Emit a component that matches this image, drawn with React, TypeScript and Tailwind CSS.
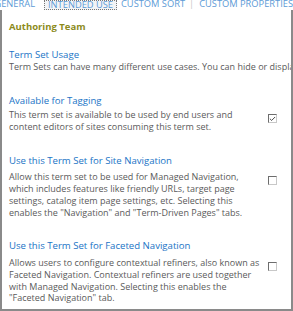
import { Check } from 'lucide-react';

type Option = {
  title: string;
  lines: string[];
  checked: boolean;
  gap: string;
  descGap: string;
};

const options: Option[] = [
  {
    title: 'Available for Tagging',
    lines: [
      'This term set is available to be used by end users and',
      'content editors of sites consuming this term set.',
    ],
    checked: true,
    gap: 'mt-[22px]',
    descGap: 'mt-[2px]',
  },
  {
    title: 'Use this Term Set for Site Navigation',
    lines: [
      'Allow this term set to be used for Managed Navigation,',
      'which includes features like friendly URLs, target page',
      'settings, catalog item page settings, etc. Selecting this',
      'enables the "Navigation" and "Term-Driven Pages" tabs.',
    ],
    checked: false,
    gap: 'mt-[23px]',
    descGap: 'mt-[4px]',
  },
  {
    title: 'Use this Term Set for Faceted Navigation',
    lines: [
      'Allows users to configure contextual refiners, also known as',
      'Faceted Navigation. Contextual refiners are used together',
      'with Managed Navigation. Selecting this enables the',
      '"Faceted Navigation" tab.',
    ],
    checked: false,
    gap: 'mt-[22px]',
    descGap: 'mt-[5px]',
  },
];

const Box = ({ checked }: { checked: boolean }) => (
  <div className="w-[9px] h-[9px] bg-white border border-t-[#6d6d6d] border-l-[#6d6d6d] border-r-[#c8c8c8] border-b-[#c8c8c8] flex items-center justify-center">
    {checked && <Check size={8} strokeWidth={3} className="text-[#333]" />}
  </div>
);

export default function App() {
  return (
    <div className="w-[293px] h-[311px] bg-white overflow-hidden font-['Open_Sans',sans-serif]">
      <div className="h-[10px] overflow-hidden flex items-start text-[9.3px] leading-[8px] text-[#5c9ad6] whitespace-nowrap">
        <div className="w-[35px] flex justify-end">
          <span>GENERAL</span>
        </div>
        <span className="ml-[9px] px-[3px] border border-dotted border-[#777] bg-[#f2f4f6]">INTENDED USE</span>
        <span className="ml-[4px]">CUSTOM SORT</span>
        <span className="ml-[4px] text-[#c8c8c8]">|</span>
        <span className="ml-[5px]">CUSTOM PROPERTIES</span>
      </div>
      <div className="h-[301px] border-2 border-t-0 border-[#8a8a8a] pl-[7px] pr-[14px] overflow-hidden">
        <div className="pt-[10px] text-[9.5px] leading-[14px] font-bold text-[#8c8b1c]">Authoring Team</div>
        <div className="mt-[15px] text-[9.6px] leading-[12px] text-[#1a74c6]">Term Set Usage</div>
        <div className="text-[9px] leading-[12px] text-[#5a5a5a] whitespace-nowrap">
          Term Sets can have many different use cases. You can hide or display the term set for these uses below.
        </div>
        {options.map((o, i) => (
          <div key={i} className={o.gap}>
            <div className="text-[9.6px] leading-[12px] text-[#1a74c6]">{o.title}</div>
            <div className={`flex items-start ${o.descGap}`}>
              <div className="flex-1 text-[9px] leading-[11.7px] text-[#5a5a5a] whitespace-nowrap">
                {o.lines.map((l, j) => (
                  <div key={j}>{l}</div>
                ))}
              </div>
              <div className="pt-[5px]">
                <Box checked={o.checked} />
              </div>
            </div>
          </div>
        ))}
      </div>
    </div>
  );
}
